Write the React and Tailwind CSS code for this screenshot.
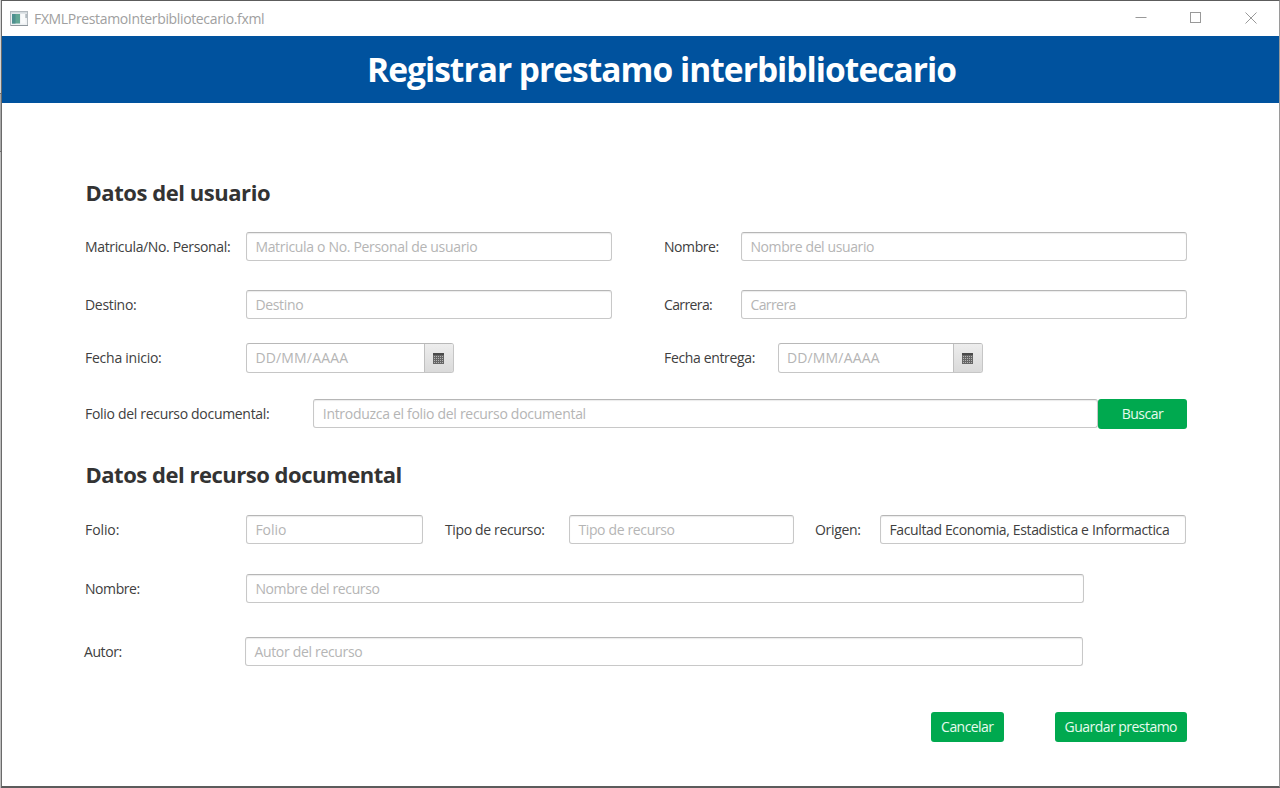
function Label({ className = "", children }) {
  return (
    <span className={`shrink-0 whitespace-nowrap text-[14px] leading-[29px] text-[#404040] ${className}`}>
      {children}
    </span>
  );
}

function Field({ className = "", value, children }) {
  return (
    <div
      className={`h-[29px] shrink-0 whitespace-nowrap rounded-[3px] border border-[#c8c8c8] border-t-[#b6b6b6] bg-white pl-[8.4px] text-[14px] leading-[27px] shadow-[inset_0_1px_1px_#ececec] ${
        value ? "text-[#404040]" : "text-[#b5b5b5]"
      } ${className}`}
    >
      {value || children}
    </div>
  );
}

function DateField({ className = "" }) {
  return (
    <div
      className={`flex h-[30px] shrink-0 overflow-hidden rounded-[3px] border border-[#c6c6c6] border-t-[#b8b8b8] bg-white ${className}`}
    >
      <div className="flex-1 pl-[8.4px] text-[14px] leading-[28px] tracking-[0.17px] text-[#b5b5b5]">
        DD/MM/AAAA
      </div>
      <div className="flex w-[29px] items-center justify-center border-l border-[#c0c0c0] bg-gradient-to-b from-[#ededed] to-[#dadada] pr-px">
        <svg width="11" height="11" viewBox="0 0 11 11" shapeRendering="crispEdges">
          <rect width="11" height="11" fill="#666" />
          <rect width="11" height="2" fill="#4a4a4a" />
          <path
            d="M1 3.5h9M1 5.5h9M1 7.5h9M1 9.5h9"
            stroke="#b4b4b4"
            strokeWidth="1"
            strokeDasharray="1 1"
          />
        </svg>
      </div>
    </div>
  );
}

function Button({ className = "", children }) {
  return (
    <button
      className={`h-[30px] shrink-0 whitespace-nowrap rounded-[3px] bg-[#00a94f] text-center text-[14px] leading-[28px] text-[#e6fbee] ${className}`}
    >
      {children}
    </button>
  );
}

function TitleBar() {
  return (
    <div className="flex h-[35px] shrink-0 items-center pl-[8px] text-[#a0a0a0]">
      <svg width="19" height="16" viewBox="0 0 19 16" className="shrink-0">
        <rect x="0.5" y="0.5" width="17" height="14" fill="#eef1f3" stroke="#b3babf" />
        <rect x="1" y="1" width="16" height="1.5" fill="#d3dade" />
        <rect x="2" y="3" width="8" height="9.5" fill="#62a695" />
        <rect x="2" y="3" width="3.5" height="9.5" fill="#4e9090" />
        <rect x="11" y="3" width="4.5" height="9.5" fill="#f8fafb" />
        <rect x="15.5" y="3" width="1.2" height="4" fill="#98a3aa" />
        <path d="M1 14.5h17" stroke="#8e979d" />
      </svg>
      <span className="ml-[5px] flex-1 text-[14px] leading-[33px] tracking-[-0.35px]">
        FXMLPrestamoInterbibliotecario.fxml
      </span>
      <svg width="124" height="13" viewBox="0 0 124 13" className="mr-[21px]" fill="none" stroke="#999">
        <path d="M1.5 5.5h11" />
        <rect x="56.5" y="0.5" width="10" height="10" />
        <path d="M111.5 0.5l11 11M122.5 0.5l-11 11" />
      </svg>
    </div>
  );
}

export default function App() {
  return (
    <div className="flex h-[788px] w-[1280px] overflow-hidden bg-white font-['Open_Sans','Noto_Sans',sans-serif] tracking-[-0.32px]">
      <div className="flex w-px shrink-0 flex-col bg-[#bdbdbd]">
        <div className="h-[93px] bg-[#d4d4d4]" />
        <div className="h-[59px] border-y border-[#6e6e6e] bg-[#a8a8a8]" />
      </div>
      <div className="flex flex-1 flex-col border border-b-2 border-[#5c5c5c] border-r-[#9a9a9a] border-l-[#6a6a6a]">
        <TitleBar />
        <header className="flex h-[67px] shrink-0 justify-center bg-[#00529e] pl-[42px]">
          <h1 className="whitespace-nowrap text-[33.5px] font-bold leading-[67px] tracking-[-0.98px] text-white">
            Registrar prestamo interbibliotecario
          </h1>
        </header>

        <main className="flex flex-col pl-[83px] pt-[73px]">
          <h2 className="h-[56px] pl-[0.5px] text-[22px] font-bold leading-[32px] tracking-[-0.45px] text-[#333]">
            Datos del usuario
          </h2>
          <div className="flex h-[58px]">
            <Label className="w-[161px] tracking-[-0.35px]">Matricula/No. Personal:</Label>
            <Field className="w-[366px]">Matricula o No. Personal de usuario</Field>
            <Label className="ml-[52px] w-[77px] tracking-[-0.42px]">Nombre:</Label>
            <Field className="w-[446px] tracking-[-0.38px]">Nombre del usuario</Field>
          </div>
          <div className="flex h-[53px]">
            <Label className="w-[161px]">Destino:</Label>
            <Field className="w-[366px]">Destino</Field>
            <Label className="ml-[52px] w-[77px] tracking-[-0.62px]">Carrera:</Label>
            <Field className="w-[446px] tracking-[-0.58px]">Carrera</Field>
          </div>
          <div className="flex h-[56px]">
            <Label className="w-[161px] tracking-[-0.25px]">Fecha inicio:</Label>
            <DateField className="w-[208px]" />
            <Label className="ml-[210px] w-[113.5px] tracking-[-0.35px]">Fecha entrega:</Label>
            <DateField className="w-[205px]" />
          </div>
          <div className="flex h-[59px]">
            <Label className="w-[228.4px] tracking-[-0.31px]">Folio del recurso documental:</Label>
            <Field className="w-[784.6px] tracking-[-0.3px]">Introduzca el folio del recurso documental</Field>
            <Button className="w-[89px] tracking-[-0.5px]">Buscar</Button>
          </div>
          <h2 className="h-[57px] pl-[0.5px] text-[22px] font-bold leading-[32px] tracking-[-0.48px] text-[#333]">
            Datos del recurso documental
          </h2>
          <div className="flex h-[59px]">
            <Label className="w-[161px] tracking-[-0.1px]">Folio:</Label>
            <Field className="w-[177px] tracking-[0px]">Folio</Field>
            <Label className="ml-[22px] w-[124px] tracking-[-0.36px]">Tipo de recurso:</Label>
            <Field className="w-[225px] tracking-[-0.36px]">Tipo de recurso</Field>
            <Label className="ml-[21px] w-[65px]">Origen:</Label>
            <Field
              className="w-[306px] tracking-[-0.36px]"
              value="Facultad Economia, Estadistica e Informactica"
            />
          </div>
          <div className="flex h-[63px]">
            <Label className="w-[161px] tracking-[-0.42px]">Nombre:</Label>
            <Field className="w-[838px] tracking-[-0.38px]">Nombre del recurso</Field>
          </div>
          <div className="-ml-px flex h-[75px]">
            <Label className="w-[161px] tracking-[-0.42px]">Autor:</Label>
            <Field className="w-[838px]">Autor del recurso</Field>
          </div>
          <div className="flex justify-end gap-[51px] pr-[92px]">
            <Button className="w-[72.4px] tracking-[-0.55px]">Cancelar</Button>
            <Button className="w-[132.5px] tracking-[-0.53px]">Guardar prestamo</Button>
          </div>
        </main>
      </div>
    </div>
  );
}
